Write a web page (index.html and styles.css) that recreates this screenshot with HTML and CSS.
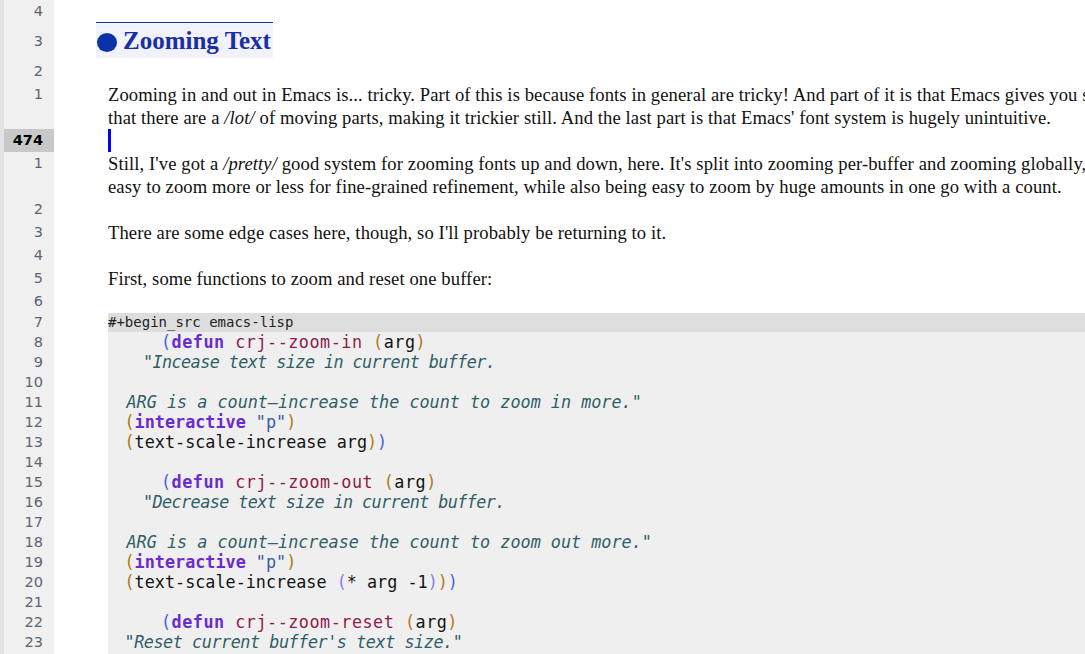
FILE: index.html
```html
<!DOCTYPE html>
<html lang="en">
<head>
<meta charset="utf-8">
<title>Zooming Text</title>
<link rel="stylesheet" href="styles.css">
</head>
<body>
<div class="editor">
  <div class="strip"></div>
  <div class="buffer">
    <div class="row r-top"><div class="ln">4</div><div class="txt"></div></div>
    <div class="row r-head"><div class="ln">3</div>
      <div class="txt"><h1 class="heading"><span class="bullet"></span><span class="htext">Zooming Text</span></h1></div>
    </div>
    <div class="row"><div class="ln">2</div><div class="txt"></div></div>
    <div class="row"><div class="ln">1</div>
      <div class="txt prose">
        <div class="vline">Zooming in and out in Emacs is... tricky. Part of this is because fonts in general are tricky! And part of it is that Emacs gives you s</div>
        <div class="vline">that there are a <i>/lot/</i> of moving parts, making it trickier still. And the last part is that Emacs' font system is hugely unintuitive.</div>
      </div>
    </div>
    <div class="row current"><div class="ln">474</div><div class="txt"><span class="cursor"></span></div></div>
    <div class="row"><div class="ln">1</div>
      <div class="txt prose">
        <div class="vline">Still, I've got a <i>/pretty/</i> good system for zooming fonts up and down, here. It's split into zooming per-buffer and zooming globally,</div>
        <div class="vline">easy to zoom more or less for fine-grained refinement, while also being easy to zoom by huge amounts in one go with a count.</div>
      </div>
    </div>
    <div class="row"><div class="ln">2</div><div class="txt"></div></div>
    <div class="row"><div class="ln">3</div><div class="txt prose"><div class="vline">There are some edge cases here, though, so I'll probably be returning to it.</div></div></div>
    <div class="row"><div class="ln">4</div><div class="txt"></div></div>
    <div class="row"><div class="ln">5</div><div class="txt prose"><div class="vline">First, some functions to zoom and reset one buffer:</div></div></div>
    <div class="row"><div class="ln">6</div><div class="txt"></div></div>
    <div class="row r-src"><div class="ln">7</div><div class="txt"><div class="src-head">#+begin_src emacs-lisp</div></div></div>

    <div class="row r-code"><div class="ln">8</div><div class="txt"><div class="code ind3 wide"><span class="p1">(</span><span class="kw">defun</span> <span class="fn">crj--zoom-in</span> <span class="p2">(</span>arg<span class="p2">)</span></div></div></div>
    <div class="row r-code"><div class="ln">9</div><div class="txt"><div class="code ind2 narrow"><span class="doc">"Incease text size in current buffer.</span></div></div></div>
    <div class="row r-code"><div class="ln">10</div><div class="txt"><div class="code"></div></div></div>
    <div class="row r-code"><div class="ln">11</div><div class="txt"><div class="code ind1a"><span class="doc">ARG is a count—increase the count to zoom in more."</span></div></div></div>
    <div class="row r-code"><div class="ln">12</div><div class="txt"><div class="code ind1"><span class="p2">(</span><span class="kw">interactive</span> <span class="str">"p"</span><span class="p2">)</span></div></div></div>
    <div class="row r-code"><div class="ln">13</div><div class="txt"><div class="code ind1"><span class="p2">(</span>text-scale-increase arg<span class="p2">)</span><span class="p1">)</span></div></div></div>
    <div class="row r-code"><div class="ln">14</div><div class="txt"><div class="code"></div></div></div>
    <div class="row r-code"><div class="ln">15</div><div class="txt"><div class="code ind3 wide"><span class="p1">(</span><span class="kw">defun</span> <span class="fn">crj--zoom-out</span> <span class="p2">(</span>arg<span class="p2">)</span></div></div></div>
    <div class="row r-code"><div class="ln">16</div><div class="txt"><div class="code ind2 narrow"><span class="doc">"Decrease text size in current buffer.</span></div></div></div>
    <div class="row r-code"><div class="ln">17</div><div class="txt"><div class="code"></div></div></div>
    <div class="row r-code"><div class="ln">18</div><div class="txt"><div class="code ind1a"><span class="doc">ARG is a count—increase the count to zoom out more."</span></div></div></div>
    <div class="row r-code"><div class="ln">19</div><div class="txt"><div class="code ind1"><span class="p2">(</span><span class="kw">interactive</span> <span class="str">"p"</span><span class="p2">)</span></div></div></div>
    <div class="row r-code"><div class="ln">20</div><div class="txt"><div class="code ind1"><span class="p2">(</span>text-scale-increase <span class="p3">(</span>* arg -1<span class="p3">)</span><span class="p2">)</span><span class="p1">)</span></div></div></div>
    <div class="row r-code"><div class="ln">21</div><div class="txt"><div class="code"></div></div></div>
    <div class="row r-code"><div class="ln">22</div><div class="txt"><div class="code ind3 wide"><span class="p1">(</span><span class="kw">defun</span> <span class="fn">crj--zoom-reset</span> <span class="p2">(</span>arg<span class="p2">)</span></div></div></div>
    <div class="row r-code"><div class="ln">23</div><div class="txt"><div class="code ind1 narrow2"><span class="doc">"Reset current buffer's text size."</span></div></div></div>
    <div class="row r-fill"><div class="ln"></div><div class="txt"><div class="code fill"></div></div></div>
  </div>
</div>
</body>
</html>
```
FILE: styles.css
```css
html, body {
  margin: 0;
  padding: 0;
  background: #ffffff;
  overflow: hidden;
}

.editor {
  display: flex;
  width: 1085px;
  height: 654px;
  overflow: hidden;
}

.strip {
  width: 4px;
  flex: 0 0 4px;
  background: #e3e3e3;
}

.buffer {
  flex: 1 1 auto;
  display: flex;
  flex-direction: column;
  min-width: 0;
}

.row {
  display: flex;
  align-items: stretch;
  flex: 0 0 auto;
}

.ln {
  flex: 0 0 50px;
  width: 50px;
  box-sizing: border-box;
  padding-right: 11px;
  background: #f0f0f0;
  color: #5c6570;
  font-family: "DejaVu Sans", sans-serif;
  font-size: 14.5px;
  line-height: 23px;
  text-align: right;
}

.txt {
  flex: 1 1 auto;
  min-width: 0;
  min-height: 23px;
  overflow: hidden;
}

.r-top .ln, .r-top .txt {
  min-height: 22px;
  height: 22px;
  line-height: 22px;
}

.r-head .ln {
  line-height: 38px;
}

.r-head .txt {
  height: 36px;
}

.heading {
  margin: 0 0 0 42px;
  width: 177px;
  height: 36px;
  box-sizing: border-box;
  display: flex;
  align-items: center;
  gap: 6px;
  padding-left: 1px;
  background: #f2f2fd;
  border-top: 1px solid #1b34a6;
  font-family: "Liberation Serif", serif;
  font-weight: bold;
  font-size: 25px;
  color: #1a2ea6;
  white-space: nowrap;
}

.bullet {
  display: inline-block;
  width: 20px;
  height: 19px;
  border-radius: 50%;
  background: #0a33aa;
  flex: 0 0 20px;
  margin-top: 3px;
}

.htext {
  line-height: 34px;
}

.prose {
  padding-left: 54px;
  font-family: "Liberation Serif", serif;
  font-size: 18.6px;
  letter-spacing: 0.1px;
  line-height: 23px;
  color: #111111;
}

.vline {
  white-space: nowrap;
  height: 23px;
}

.current .ln {
  background: #c8c8c8;
  color: #000000;
  font-weight: bold;
}

.cursor {
  display: block;
  margin-left: 54px;
  width: 3px;
  height: 23px;
  background: #0000ff;
}

.r-src .ln, .r-src .txt {
  min-height: 19px;
  height: 19px;
  line-height: 19px;
}

.src-head {
  margin-left: 54px;
  height: 19px;
  background: #dedede;
  font-family: "DejaVu Sans Mono", monospace;
  font-size: 14px;
  line-height: 19px;
  color: #222222;
  white-space: pre;
}

.r-code .ln {
  line-height: 20px;
}

.r-code .txt {
  min-height: 20px;
  height: 20px;
}

.r-fill {
  flex: 1 1 auto;
}

.r-fill .txt {
  min-height: 0;
}

.code {
  margin-left: 54px;
  height: 20px;
  background: #efefef;
  font-family: "DejaVu Sans Mono", monospace;
  font-size: 16.8px;
  line-height: 20px;
  color: #141414;
  white-space: pre;
  box-sizing: border-box;
}

.code.fill {
  height: 100%;
}

.ind1 { padding-left: 16.5px; }
.ind1a { padding-left: 18.5px; }
.ind2 { padding-left: 35px; }
.ind3 { padding-left: 53px; }

.wide { letter-spacing: 0.5px; }
.narrow { letter-spacing: -0.58px; }
.narrow2 { letter-spacing: -0.45px; }

.p1 { color: #4b5fe0; }
.p2 { color: #b07a10; }
.p3 { color: #8a7cf0; }
.kw { color: #6a2bd0; font-weight: bold; }
.fn { color: #8c1c4c; }
.doc { color: #2f5e66; font-style: italic; }
.str { color: #3b5aa8; }
```
